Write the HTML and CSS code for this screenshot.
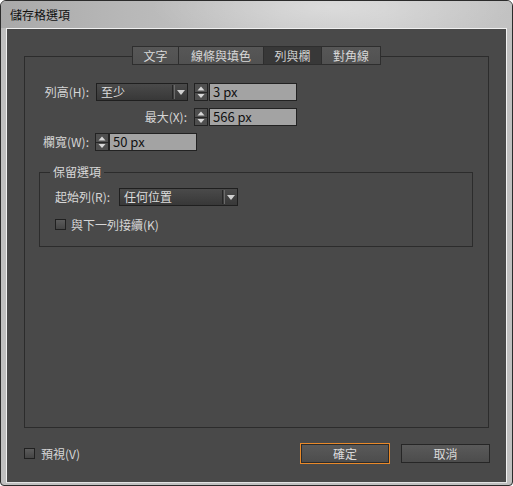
FILE: index.html
```html
<!DOCTYPE html>
<html lang="zh-Hant">
<head>
<meta charset="utf-8">
<title>儲存格選項</title>
<link rel="stylesheet" href="styles.css">
</head>
<body>
<div class="window">
  <div class="titlebar">儲存格選項</div>
  <div class="client">
    <div class="tabs">
      <div class="tab t1">文字</div>
      <div class="tab t2">線條與填色</div>
      <div class="tab t3 active">列與欄</div>
      <div class="tab t4">對角線</div>
    </div>
    <div class="panel">
      <div class="grid">
        <div class="lbl">列高(H):</div>
        <div class="select sel-a"><span class="sel-text">至少</span><span class="sep"></span><span class="arrow"></span></div>
        <div class="spin"><svg width="14" height="18" viewBox="0 0 14 18"><rect x="0.5" y="0.5" width="13" height="17" fill="#4f4f4f" stroke="#222"/><path d="M3.5 7.5h7L7 3.5z" fill="#d8d8d8"/><path d="M1 9.5h12" stroke="#262626"/><path d="M3.5 11h7L7 15z" fill="#d8d8d8"/></svg></div>
        <div class="field f-a">3 px</div>

        <div class="lbl lbl-wide">最大(X):</div>
        <div class="spin"><svg width="14" height="18" viewBox="0 0 14 18"><rect x="0.5" y="0.5" width="13" height="17" fill="#4f4f4f" stroke="#222"/><path d="M3.5 7.5h7L7 3.5z" fill="#d8d8d8"/><path d="M1 9.5h12" stroke="#262626"/><path d="M3.5 11h7L7 15z" fill="#d8d8d8"/></svg></div>
        <div class="field f-a">566 px</div>

        <div class="lbl">欄寬(W):</div>
        <div class="combo">
          <div class="spin"><svg width="14" height="18" viewBox="0 0 14 18"><rect x="0.5" y="0.5" width="13" height="17" fill="#4f4f4f" stroke="#222"/><path d="M3.5 7.5h7L7 3.5z" fill="#d8d8d8"/><path d="M1 9.5h12" stroke="#262626"/><path d="M3.5 11h7L7 15z" fill="#d8d8d8"/></svg></div>
          <div class="field f-b">50 px</div>
        </div>
      </div>

      <div class="group">
        <div class="group-title"><span>保留選項</span></div>
        <div class="g-row">
          <div class="g-lbl">起始列(R):</div>
          <div class="select sel-b"><span class="sel-text">任何位置</span><span class="sep"></span><span class="arrow"></span></div>
        </div>
        <div class="check-row g-check"><span class="cb"></span><span>與下一列接續(K)</span></div>
      </div>
    </div>

    <div class="footer">
      <div class="check-row"><span class="cb"></span><span class="cb-text">預視(V)</span></div>
      <div class="buttons">
        <div class="btn primary">確定</div>
        <div class="btn">取消</div>
      </div>
    </div>
  </div>
</div>
</body>
</html>
```

FILE: styles.css
```css
* { box-sizing: border-box; }
html, body { margin: 0; padding: 0; background: #ffffff; }
body {
  font-family: "Noto Sans CJK TC", "Noto Sans", sans-serif;
  font-size: 12px;
}
.window {
  width: 513px;
  height: 486px;
  border: 1px solid #2b2b2b;
  border-radius: 6px 6px 4px 4px;
  background: #bfbfbf;
  overflow: hidden;
  display: flex;
  flex-direction: column;
}
.titlebar {
  height: 27px;
  flex: none;
  padding-left: 9px;
  line-height: 27px;
  color: #111;
  font-size: 12px;
  background:
    radial-gradient(ellipse 180px 40px at 330px 6px, rgba(255,255,255,0.35), rgba(255,255,255,0) 100%),
    linear-gradient(90deg, #a9a9a9 0%, #b8b8b8 25%, #c6c6c6 55%, #cacaca 75%, #c2c2c2 100%);
}
.client {
  margin: 0 5px;
  height: 455px;
  flex: none;
  border: 1px solid #f0f0f0;
  border-bottom-color: #e2e2e2;
  background: #494949;
  padding: 17px 17px 0 17px;
  color: #d6d6d6;
}
.tabs {
  display: flex;
  justify-content: center;
  height: 19px;
}
.tab {
  height: 19px;
  line-height: 17px;
  text-align: center;
  background: linear-gradient(#575757, #515151);
  border: 1px solid #2e2e2e;
  color: #d8d8d8;
  margin-left: -1px;
}
.t1 { width: 47px; margin-left: 0; }
.t2 { width: 86px; }
.t3 { width: 59px; }
.t4 { width: 60px; }
.tab.active { background: #383838; color: #d0d0d0; }

.panel {
  margin-top: -9px;
  height: 372px;
  border: 1px solid #2c2c2c;
  padding-top: 26px;
}
.grid {
  display: grid;
  grid-template-columns: 64px 7px 92px 6px 14px 1px 88px;
  grid-template-rows: 18px 18px 18px;
  row-gap: 7px;
  align-items: center;
}
.lbl {
  grid-column: 1;
  text-align: right;
  line-height: 18px;
  white-space: nowrap;
}
.lbl-wide { grid-column: 1 / 4; padding-right: 1px; }
.sel-a { grid-column: 3; }
.grid > .spin { grid-column: 5; }
.grid > .f-a { grid-column: 7; }
.combo {
  grid-column: 3 / 8;
  display: flex;
  margin-left: -1px;
}
.spin { width: 14px; height: 18px; }
.spin svg { display: block; }
.field {
  height: 18px;
  background: #a3a3a3;
  border: 1px solid #222;
  color: #111;
  font-size: 13px;
  line-height: 16px;
  padding-left: 3px;
}
.f-a { width: 88px; }
.f-b { width: 88px; margin-left: 0; }

.select {
  display: flex;
  align-items: center;
  height: 18px;
  border: 1px solid #1f1f1f;
  background: linear-gradient(#4a4a4a, #383838);
  color: #dcdcdc;
}
.sel-text { flex: 1; padding-left: 4px; line-height: 16px; }
.sep {
  width: 3px;
  height: 14px;
  border-left: 1px solid #262626;
  border-right: 1px solid #6a6a6a;
}
.arrow {
  width: 12px;
  height: 16px;
  position: relative;
}
.arrow::after {
  content: "";
  position: absolute;
  left: 2px;
  top: 6px;
  border-left: 4px solid transparent;
  border-right: 4px solid transparent;
  border-top: 5px solid #d0d0d0;
}

.group {
  margin: 21px 15px 0 14px;
  height: 75px;
  border: 1px solid #2c2c2c;
  padding-left: 15px;
}
.group-title {
  margin-top: -9px;
  height: 16px;
  line-height: 16px;
  margin-left: -5px;
}
.group-title span {
  display: inline-block;
  background: #494949;
  padding: 0 3px;
  color: #d8d8d8;
}
.g-row {
  margin-top: 8px;
  display: flex;
  align-items: center;
  height: 18px;
}
.g-lbl { width: 64px; line-height: 18px; white-space: nowrap; }
.sel-b { width: 119px; }
.check-row {
  display: flex;
  align-items: center;
  height: 17px;
}
.g-check { margin-top: 10px; }
.cb {
  width: 11px;
  height: 11px;
  border: 1px solid #202020;
  background: linear-gradient(#5c5c5c, #454545);
  margin-right: 5px;
  flex: none;
}
.cb-text { margin-left: 1px; }

.footer {
  margin-top: 15px;
  height: 21px;
  display: flex;
  align-items: center;
  justify-content: space-between;
  margin-right: -1px;
}
.buttons { display: flex; gap: 11px; height: 21px; align-items: center; }
.btn {
  width: 89px;
  height: 19px;
  border: 1px solid #262626;
  background: linear-gradient(#5a5a5a, #4c4c4c);
  color: #dadada;
  text-align: center;
  line-height: 17px;
}
.btn.primary {
  width: 90px;
  height: 21px;
  line-height: 19px;
  border: 1px solid #e8892a;
  box-shadow: inset 0 0 0 1px #2a2a2a;
}
```
